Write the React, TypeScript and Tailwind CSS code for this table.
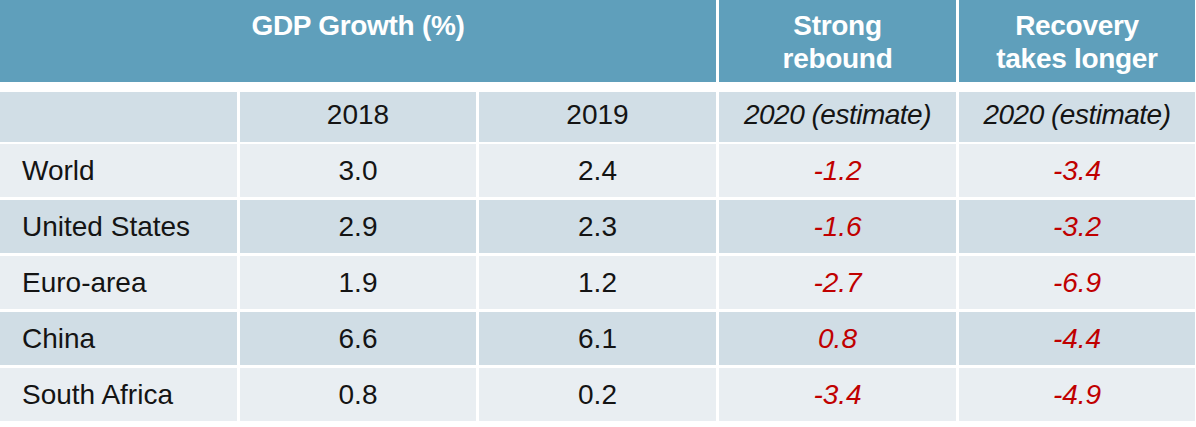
const rows = [
  { name: "World", y18: "3.0", y19: "2.4", strong: "-1.2", longer: "-3.4" },
  { name: "United States", y18: "2.9", y19: "2.3", strong: "-1.6", longer: "-3.2" },
  { name: "Euro-area", y18: "1.9", y19: "1.2", strong: "-2.7", longer: "-6.9" },
  { name: "China", y18: "6.6", y19: "6.1", strong: "0.8", longer: "-4.4" },
  { name: "South Africa", y18: "0.8", y19: "0.2", strong: "-3.4", longer: "-4.9" },
]

const cols = "grid grid-cols-[237px_236px_237px_237px_236px] gap-x-[3px]"

export default function App() {
  return (
    <div className="w-[1196px] h-[427px] bg-white text-[28px] text-[#141414] font-['Liberation_Sans',Arial,sans-serif] overflow-hidden">
      {/* header */}
      <div className={`${cols} h-[82px] text-white font-bold leading-[33px] tracking-[-0.3px]`}>
        <div className="col-span-3 bg-[#5f9fbb] text-center pt-[9px]">GDP Growth (%)</div>
        <div className="bg-[#5f9fbb] text-center pt-[9px]">
          Strong
          <br />
          rebound
        </div>
        <div className="bg-[#5f9fbb] text-center pt-[9px]">
          Recovery
          <br />
          takes longer
        </div>
      </div>

      {/* sub header */}
      <div className={`${cols} h-[50px] mt-[10px] bg-white`}>
        <div className="bg-[#d1dee6]" />
        <div className="bg-[#d1dee6] flex items-center justify-center pb-[4px]">2018</div>
        <div className="bg-[#d1dee6] flex items-center justify-center pb-[4px]">2019</div>
        <div className="bg-[#d1dee6] flex items-center justify-center pb-[4px] italic tracking-[-0.5px]">
          2020 (estimate)
        </div>
        <div className="bg-[#d1dee6] flex items-center justify-center pb-[4px] italic tracking-[-0.5px]">
          2020 (estimate)
        </div>
      </div>

      {/* body */}
      <div className="flex flex-col gap-y-[3px] mt-[2px]">
        {rows.map((r, i) => {
          const bg = i % 2 === 0 ? "bg-[#e9eef2]" : "bg-[#d0dde5]"
          return (
            <div key={r.name} className={`${cols} h-[53px]`}>
              <div className={`${bg} flex items-center pl-[22px]`}>{r.name}</div>
              <div className={`${bg} flex items-center justify-center`}>{r.y18}</div>
              <div className={`${bg} flex items-center justify-center`}>{r.y19}</div>
              <div className={`${bg} flex items-center justify-center italic text-[#c00000]`}>{r.strong}</div>
              <div className={`${bg} flex items-center justify-center italic text-[#c00000]`}>{r.longer}</div>
            </div>
          )
        })}
      </div>
    </div>
  )
}
